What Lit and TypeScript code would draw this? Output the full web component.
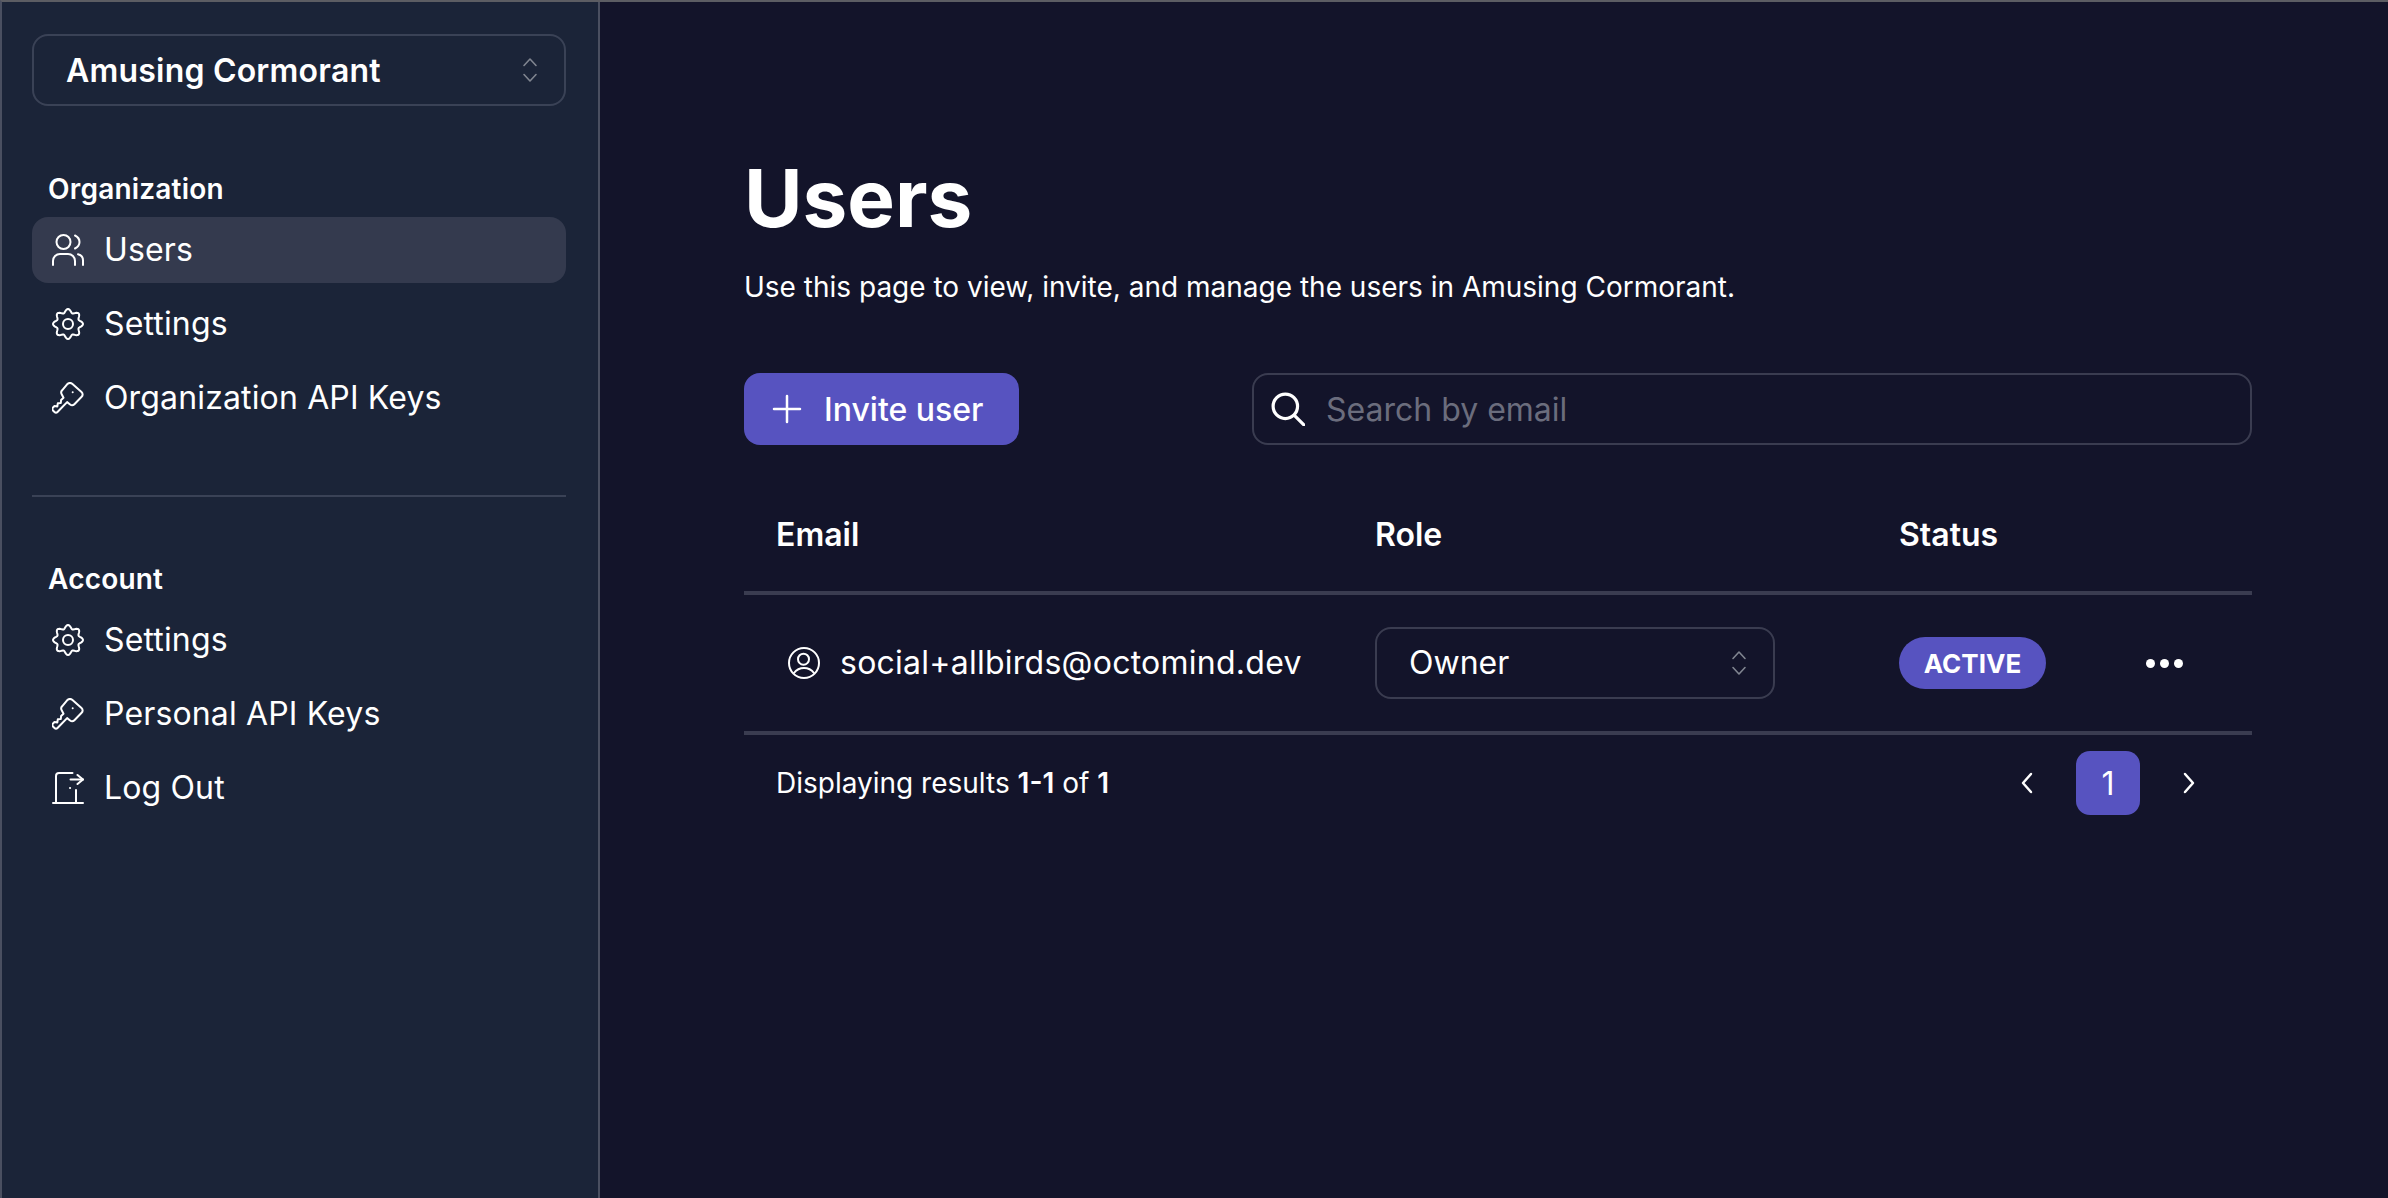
import { LitElement, html, css, svg } from 'lit';
import { customElement } from 'lit/decorators.js';

const icon = (body: unknown, size = 32, cls = '') => html`
    <svg class="icon ${cls}" width=${size} height=${size} viewBox="0 0 32 32" fill="none" stroke="currentColor" stroke-width="2" stroke-linecap="round" stroke-linejoin="round">${body}</svg>
`;

// scalloped outline, 8 lobes with one pointing straight up
const gearOutline = Array.from({ length: 96 }, (_, i) => {
    const a = (i / 96) * Math.PI * 2;
    const r = 13.2 + 1.8 * Math.cos(8 * a);
    return `${(16 + r * Math.sin(a)).toFixed(2)},${(16 - r * Math.cos(a)).toFixed(2)}`;
}).join(' ');

const usersIcon = svg`
    <circle cx="11.500" cy="8" r="7"/>
    <path d="M23 1.500c3 1.500 4.500 3.800 4.500 6.500s-1.500 5-4.500 6.500"/>
    <path d="M1 31v-4a7 7 0 0 1 7-7h8a7 7 0 0 1 7 7v4"/>
    <path d="M26 20.200c3 .8 5 3 5 6v4.800"/>
`;
const gearIcon = svg`
    <circle cx="16" cy="16" r="5"/>
    <polygon points=${gearOutline}/>
`;
const keyIcon = svg`
    <path d="M15.500 1.900c1.500-1.200 3.500-1.200 5 .1l9 8c1.500 1.400 1.500 3.400 .1 4.800l-7.200 7.400c-1.300 1.300-3 1.300-4.300 .3l-3-2.400L5.500 30c-1 1-2 1-3 0L1 28.500c-1-1-1-2 0-3l1.500-1.500 2.800 .5 .5-3.200 3-.3 .3-3 2.400-2.300-1.800-3.400c-.8-1.500-.6-3 .4-4z"/>
    <circle cx="20.700" cy="10.200" r="1" fill="currentColor" stroke="none"/>
`;
const logoutIcon = svg`
    <path d="M1 31h30"/>
    <path d="M4 31V4a3 3 0 0 1 3-3h13.500"/>
    <path d="M24 18v13"/>
    <path d="M18 16h.1"/>
    <path d="M18.500 7.500h12.500"/>
    <path d="M25.500 3l5.500 4.500-5.500 4.500"/>
`;
const chevrons = svg`
    <path d="M10 11.500l6-6.500 6 6.500" stroke-width="1.600"/>
    <path d="M10 20.500l6 6.500 6-6.500" stroke-width="1.600"/>
`;
const userCircle = svg`
    <circle cx="16" cy="16" r="15"/>
    <circle cx="15.500" cy="12.200" r="5.500"/>
    <path d="M6 26c2.500-3.300 5.500-5 10-5s7.500 1.700 10 5"/>
`;

interface NavItem {
    label: string;
    icon: unknown;
    active?: boolean;
}

const orgNav: NavItem[] = [
    { label: 'Users', icon: usersIcon, active: true },
    { label: 'Settings', icon: gearIcon },
    { label: 'Organization API Keys', icon: keyIcon },
];

const accountNav: NavItem[] = [
    { label: 'Settings', icon: gearIcon },
    { label: 'Personal API Keys', icon: keyIcon },
    { label: 'Log Out', icon: logoutIcon },
];

@customElement('app-root')
export class AppRoot extends LitElement {
    static styles = css`
        :host {
            display: flex;
            box-sizing: border-box;
            min-height: 100vh;
            border-top: 2px solid #5c5d63;
            border-left: 2px solid #4a4f60;
            background: #13142a;
            color: #ffffff;
            font-family: Inter, "Liberation Sans", sans-serif;
            font-size: 32px;
        }

        .icon {
            flex: none;
            display: block;
        }

        .sidebar {
            box-sizing: border-box;
            width: 598px;
            flex: none;
            padding: 32px 32px 0 30px;
            background: #1b2438;
            border-right: 2px solid #4a4f60;
        }

        .org-select {
            box-sizing: border-box;
            height: 72px;
            display: flex;
            align-items: center;
            justify-content: space-between;
            padding: 0 18px 0 32px;
            border: 2px solid #3a4256;
            border-radius: 16px;
            font-size: 32px;
            font-weight: 600;
            letter-spacing: 0.2px;
        }

        .chevrons {
            color: #808590;
        }

        .section-title {
            height: 53px;
            padding-left: 16px;
            font-size: 28px;
            font-weight: 600;
            line-height: 50px;
            letter-spacing: 0.2px;
        }

        .org-section {
            margin-top: 58px;
        }

        .nav {
            display: flex;
            flex-direction: column;
            gap: 8px;
        }

        .nav-item {
            height: 66px;
            display: flex;
            align-items: center;
            gap: 20px;
            padding-left: 20px;
            border-radius: 16px;
            letter-spacing: 0.15px;
        }

        .nav-item span {
            padding-bottom: 2px;
        }

        .nav-item.active {
            background: #343a4e;
        }

        .divider {
            height: 2px;
            margin-top: 64px;
            background: #3a4256;
        }

        .account-section {
            margin-top: 57px;
        }

        .main {
            flex: 1;
            box-sizing: border-box;
            padding: 146px 136px 0 144px;
        }

        h1 {
            margin: 0;
            font-size: 80px;
            line-height: 100px;
            font-weight: 700;
        }

        .subtitle {
            margin: 19px 0 0;
            font-size: 28px;
            line-height: 40px;
        }

        .toolbar {
            display: flex;
            justify-content: space-between;
            margin-top: 66px;
        }

        .invite {
            box-sizing: border-box;
            width: 275px;
            height: 72px;
            display: flex;
            align-items: center;
            gap: 21px;
            padding-left: 27px;
            border-radius: 16px;
            background: #5753c0;
            font-weight: 500;
        }

        .search {
            box-sizing: border-box;
            width: 1000px;
            height: 72px;
            display: flex;
            align-items: center;
            gap: 21px;
            padding-left: 17px;
            border: 2px solid #3a3c50;
            border-radius: 16px;
            color: #6b6d7d;
        }

        .search .icon {
            color: #ffffff;
        }

        .row {
            box-sizing: border-box;
            display: grid;
            grid-template-columns: 631px 524px 1fr;
            align-items: center;
            border-bottom: 4px solid #3a3c50;
        }

        .row.head {
            height: 117px;
            margin-top: 33px;
            font-weight: 600;
        }

        .row.head .cell:first-child {
            padding-left: 32px;
        }

        .row.body {
            height: 140px;
        }

        .row.body span {
            padding-bottom: 2px;
        }

        .email {
            display: flex;
            align-items: center;
            gap: 20px;
            padding-left: 44px;
            letter-spacing: 0.25px;
        }

        .role-select {
            box-sizing: border-box;
            width: 400px;
            height: 72px;
            display: flex;
            align-items: center;
            justify-content: space-between;
            padding: 0 18px 0 32px;
            border: 2px solid #3a3c50;
            border-radius: 16px;
        }

        .status {
            display: flex;
            align-items: center;
            justify-content: space-between;
            padding-right: 69px;
        }

        .badge {
            box-sizing: border-box;
            width: 147px;
            height: 52px;
            display: flex;
            align-items: center;
            justify-content: center;
            border-radius: 26px;
            background: #5753c0;
            font-size: 26px;
            font-weight: 700;
        }

        .dots {
            display: flex;
            gap: 5px;
        }

        .row.body .dots span {
            width: 9px;
            height: 9px;
            padding: 0;
            border-radius: 50%;
            background: #ffffff;
        }

        .pagination {
            display: flex;
            align-items: center;
            justify-content: space-between;
            padding: 16px 48px 0 32px;
        }

        .results {
            font-size: 28px;
        }

        .results b {
            font-weight: 600;
        }

        .pages {
            display: flex;
            align-items: center;
            gap: 32px;
        }

        .page {
            width: 64px;
            height: 64px;
            display: flex;
            align-items: center;
            justify-content: center;
            border-radius: 14px;
            background: #5753c0;
        }
    `;

    private renderNav(items: NavItem[]) {
        return html`
            <div class="nav">
                ${items.map(item => html`
                    <div class="nav-item ${item.active ? 'active' : ''}">
                        ${icon(item.icon)}<span>${item.label}</span>
                    </div>
                `)}
            </div>
        `;
    }

    render() {
        return html`
            <aside class="sidebar">
                <div class="org-select">
                    <span>Amusing Cormorant</span>
                    ${icon(chevrons, 32, 'chevrons')}
                </div>
                <div class="org-section">
                    <div class="section-title">Organization</div>
                    ${this.renderNav(orgNav)}
                </div>
                <div class="divider"></div>
                <div class="account-section">
                    <div class="section-title">Account</div>
                    ${this.renderNav(accountNav)}
                </div>
            </aside>
            <main class="main">
                <h1>Users</h1>
                <p class="subtitle">Use this page to view, invite, and manage the users in Amusing Cormorant.</p>
                <div class="toolbar">
                    <div class="invite">
                        ${icon(svg`<path d="M16 3v26M3 16h26" stroke-width="2.500"/>`)}
                        <span>Invite user</span>
                    </div>
                    <div class="search">
                        ${icon(svg`<circle cx="13.500" cy="13.500" r="11.500" stroke-width="3"/><path d="M22 22l9 9" stroke-width="3"/>`, 34)}
                        <span>Search by email</span>
                    </div>
                </div>
                <div class="row head">
                    <div class="cell">Email</div>
                    <div class="cell">Role</div>
                    <div class="cell">Status</div>
                </div>
                <div class="row body">
                    <div class="email">
                        ${icon(userCircle)}
                        <span>social+allbirds@octomind.dev</span>
                    </div>
                    <div>
                        <div class="role-select">
                            <span>Owner</span>
                            ${icon(chevrons, 32, 'chevrons')}
                        </div>
                    </div>
                    <div class="status">
                        <div class="badge">ACTIVE</div>
                        <div class="dots"><span></span><span></span><span></span></div>
                    </div>
                </div>
                <div class="pagination">
                    <div class="results">Displaying results <b>1-1</b> of <b>1</b></div>
                    <div class="pages">
                        ${icon(svg`<path d="M19 7l-8 9 8 9" stroke-width="2.500"/>`, 32)}
                        <div class="page">1</div>
                        ${icon(svg`<path d="M13 7l8 9-8 9" stroke-width="2.500"/>`, 32)}
                    </div>
                </div>
            </main>
        `;
    }
}

declare global {
    interface HTMLElementTagNameMap {
        'app-root': AppRoot;
    }
}
